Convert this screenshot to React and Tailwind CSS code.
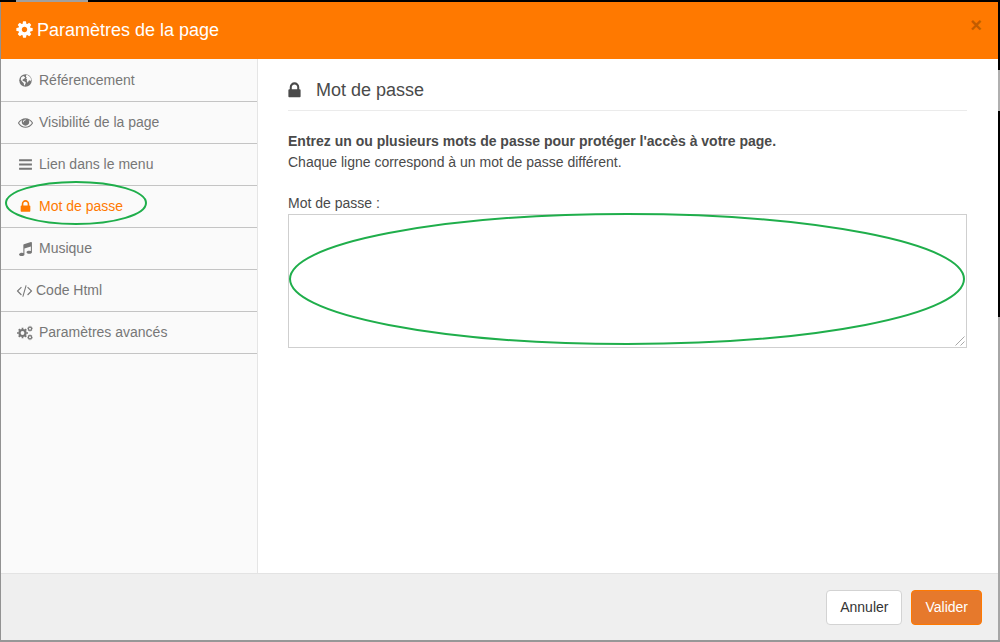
const paths = {
  cog: "M1152 896q0-106-75-181t-181-75-181 75-75 181 75 181 181 75 181-75 75-181zm512-109v222q0 12-8 23t-20 13l-185 28q-19 54-39 91 35 50 107 138 10 12 10 25t-9 23q-27 37-99 108t-94 71q-12 0-26-9l-138-108q-44 23-91 38-16 136-29 186-7 28-36 28h-222q-14 0-24.5-8.5t-11.5-21.5l-28-184q-49-16-90-37l-141 107q-10 9-25 9-14 0-25-11-126-114-165-168-7-10-7-23 0-12 8-23 15-21 51-66.5t54-70.5q-27-50-41-99l-183-27q-13-2-21-12.5t-8-23.5v-222q0-12 8-23t19-13l186-28q14-46 39-92-40-57-107-138-10-12-10-24 0-10 9-23 26-36 98.5-107.5t94.5-71.5q13 0 26 10l138 107q44-23 91-38 16-136 29-186 7-28 36-28h222q14 0 24.5 8.5t11.5 21.5l28 184q49 16 90 37l142-107q9-9 24-9 13 0 25 10 129 119 165 170 7 8 7 22 0 12-8 23-15 21-51 66.5t-54 70.5q26 50 41 98l183 28q13 2 21 12.5t8 23.5z",
  eye: "M1664 960q-152-236-381-353 61 104 61 225 0 185-131.5 316.5t-316.5 131.5-316.5-131.5-131.5-316.5q0-121 61-225-229 117-381 353 133 205 333.5 326.5t434.5 121.5 434.5-121.5 333.5-326.5zm-720-384q0-20-14-34t-34-14q-125 0-214.5 89.5t-89.5 214.5q0 20 14 34t34 14 34-14 14-34q0-86 61-147t147-61q20 0 34-14t14-34zm848 384q0 34-20 69-140 230-376.5 368.5t-499.5 138.5-499.5-139-376.5-368q-20-35-20-69t20-69q140-229 376.5-368t499.5-139 499.5 139 376.5 368q20 35 20 69z",
  bars: "M128 256h1536v256H128zM128 768h1536v256H128zM128 1280h1536v256H128z",
  lock: "M640 768h512v-192q0-106-75-181t-181-75-181 75-75 181v192zm832 96v576q0 40-28 68t-68 28h-960q-40 0-68-28t-28-68v-576q0-40 28-68t68-28h32v-192q0-184 132-316t316-132 316 132 132 316v192h32q40 0 68 28t28 68z",
  music: "M1664 224v1120q0 50-34 89t-86 60.5-103.5 32-96.5 10.5-96.5-10.5-103.5-32-86-60.5-34-89 34-89 86-60.5 103.5-32 96.5-10.5q105 0 192 39v-537l-768 237v709q0 50-34 89t-86 60.5-103.5 32-96.5 10.5-96.5-10.5-103.5-32-86-60.5-34-89 34-89 86-60.5 103.5-32 96.5-10.5q105 0 192 39v-967q0-31 19-56.5t49-35.5l832-256q12-4 28-4 40 0 68 28t28 68z",
  code: "M553 1399l-50 50q-10 10-23 10t-23-10l-466-466q-10-10-10-23t10-23l466-466q10-10 23-10t23 10l50 50q10 10 10 23t-10 23l-393 393 393 393q10 10 10 23t-10 23zm591-1067l-373 1291q-4 13-15.5 19.5t-23.5 2.5l-62-17q-13-4-19.5-15.5t-2.5-24.5l373-1291q4-13 15.5-19.5t23.5-2.5l62 17q13 4 19.5 15.5t2.5 24.5zm657 651l-466 466q-10 10-23 10t-23-10l-50-50q-10-10-10-23t10-23l393-393-393-393q-10-10-10-23t10-23l50-50q10-10 23-10t23 10l466 466q10 10 10 23t-10 23z",
};

function Icon({ name, className }) {
  return (
    <svg viewBox="0 0 1792 1792" fill="currentColor" aria-hidden="true" className={`shrink-0 overflow-visible ${className}`}>
      <path d={paths[name]} />
    </svg>
  );
}

function GlobeIcon({ className }) {
  return (
    <svg viewBox="0 0 26 26" aria-hidden="true" className={`shrink-0 ${className}`}>
      <circle cx="13" cy="13" r="12.5" fill="currentColor" />
      <path
        d="M14 2.5l3-.3 5.5 4 2 5-.8 3.5-1.7-2-2.5 1-2.2 4-1.8-4 .7-3-2.2-1.2 1.5-2.5-1.5-1.5zM4.5 6.5l4-2.5 2.5 1.5 1.5 2-2.5 2.2-3 1.8.5 2.5 3 .5 3.5 3-1.5 2.5-1 3-1.5-.5-.5-4-3-3-3-4z"
        fill="#fafafa"
      />
    </svg>
  );
}

function Gear({ cx, cy, r, width }) {
  return (
    <g fill="none" stroke="currentColor">
      <circle cx={cx} cy={cy} r={r} strokeWidth={width} />
      <circle cx={cx} cy={cy} r={r + width * 0.7} strokeWidth={width * 0.7} pathLength="16" strokeDasharray="1 1" strokeDashoffset="0.5" />
    </g>
  );
}

function CogsIcon({ className }) {
  return (
    <svg viewBox="0 0 16 16" aria-hidden="true" className={`shrink-0 ${className}`}>
      <Gear cx={5.5} cy={8} r={3} width={2.2} />
      <Gear cx={13} cy={3.7} r={1.6} width={1.2} />
      <Gear cx={13} cy={12.3} r={1.6} width={1.2} />
    </svg>
  );
}

const items = [
  { label: "Référencement", icon: <GlobeIcon className="size-[13px]" /> },
  { label: "Visibilité de la page", icon: <Icon name="eye" className="size-[15px]" /> },
  { label: "Lien dans le menu", icon: <Icon name="bars" className="size-[15px]" /> },
  { label: "Mot de passe", icon: <Icon name="lock" className="size-[15px]" />, active: true },
  { label: "Musique", icon: <Icon name="music" className="size-[15px]" /> },
  { label: "Code Html", icon: <Icon name="code" className="size-[15px]" />, wide: true },
  { label: "Paramètres avancés", icon: <CogsIcon className="size-4" /> },
];

function NavItem({ label, icon, active, wide }) {
  return (
    <li className="relative border-b border-[#c4c4c4]">
      <a
        href="#"
        aria-current={active ? "page" : undefined}
        className={`flex h-[41px] items-center gap-1 text-[14px] ${wide ? "pl-[15px]" : "pl-[14px]"} ${active ? "text-[#ff7900]" : "text-[#777777]"}`}
      >
        <span className={`flex justify-center ${wide ? "w-4" : "w-5"}`}>{icon}</span>
        {label}
      </a>
      {active && (
        <svg viewBox="0 0 144 46" aria-hidden="true" className="pointer-events-none absolute -top-1.5 left-[3px] h-[46px] w-36">
          <ellipse cx="72" cy="23" rx="70" ry="21" fill="none" stroke="#1fae4b" strokeWidth="2" />
        </svg>
      )}
    </li>
  );
}

export default function App() {
  return (
    <div className="flex min-h-screen flex-col bg-[#a6a6a6] font-['Liberation_Sans',Arial,sans-serif] text-[#4a4a4a]">
      <div className="flex h-0.5 bg-black pl-4">
        <div className="w-[72px] bg-[#a0a0a0]" />
      </div>
      <div className="flex grow">
        <div className="w-px bg-[#929292]" />
        <main className="flex grow flex-col bg-white">
          <header className="flex h-[57px] items-center bg-[#ff7900] pr-4 pl-[14px] text-white">
            <Icon name="cog" className="mb-0.5 size-[19px]" />
            <h1 className="ml-[3px] text-[18px]">Paramètres de la page</h1>
            <button type="button" aria-label="Fermer" className="mb-3 ml-auto text-[20px] leading-5 font-bold text-[#c25c00]">
              ×
            </button>
          </header>
          <div className="flex grow">
            <nav aria-label="Paramètres" className="w-[257px] shrink-0 border-r border-[#e5e5e5] bg-[#fafafa]">
              <ul className="pt-px">
                {items.map((item) => (
                  <NavItem key={item.label} {...item} />
                ))}
              </ul>
            </nav>
            <section className="min-w-0 grow pt-3 pr-[31px] pl-[30px] text-[14px]">
              <h2 className="flex h-10 items-center border-b border-[#ebebeb] text-[18px]">
                <Icon name="lock" className="-ml-[3px] size-[19px]" />
                <span className="ml-3">Mot de passe</span>
              </h2>
              <p className="mt-5 leading-[21px]">
                <strong>Entrez un ou plusieurs mots de passe pour protéger l'accès à votre page.</strong>
                <br />
                Chaque ligne correspond à un mot de passe différent.
              </p>
              <label htmlFor="passwords" className="mt-5 block leading-[21px]">
                Mot de passe :
              </label>
              <div className="relative h-[134px]">
                <textarea id="passwords" className="block h-full w-full resize-none border border-[#cfcfcf] bg-white p-2 outline-none" />
                <svg viewBox="0 0 679 134" preserveAspectRatio="none" aria-hidden="true" className="pointer-events-none absolute inset-0 h-full w-full overflow-visible">
                  <ellipse cx="339" cy="65" rx="337" ry="65" fill="none" stroke="#1fae4b" strokeWidth="2" />
                </svg>
                <svg viewBox="0 0 10 10" aria-hidden="true" className="pointer-events-none absolute right-0.5 bottom-0.5 size-2.5">
                  <path d="M0.5 9.5l9-9M5.5 9.5l4-4" stroke="#a8a8a8" fill="none" />
                </svg>
              </div>
            </section>
          </div>
          <footer className="flex h-[67px] items-center justify-end gap-[9px] border-t border-[#e3e3e3] bg-[#efefef] pr-4">
            <button type="button" className="h-[35px] rounded border border-[#d3d3d3] bg-white px-[13px] text-[14px] text-[#333333]">
              Annuler
            </button>
            <button type="button" className="h-[35px] rounded border border-[#ff7900] bg-[#e6792c] px-[13px] text-[14px] text-white">
              Valider
            </button>
          </footer>
        </main>
        <div className="flex w-0.5 flex-col">
          <div className="h-[68px] bg-black" />
          <div className="h-[41px] bg-[#b0b0b0]" />
          <div className="h-[206px] bg-black" />
        </div>
      </div>
      <div className="h-0.5 bg-[#979797]" />
    </div>
  );
}
